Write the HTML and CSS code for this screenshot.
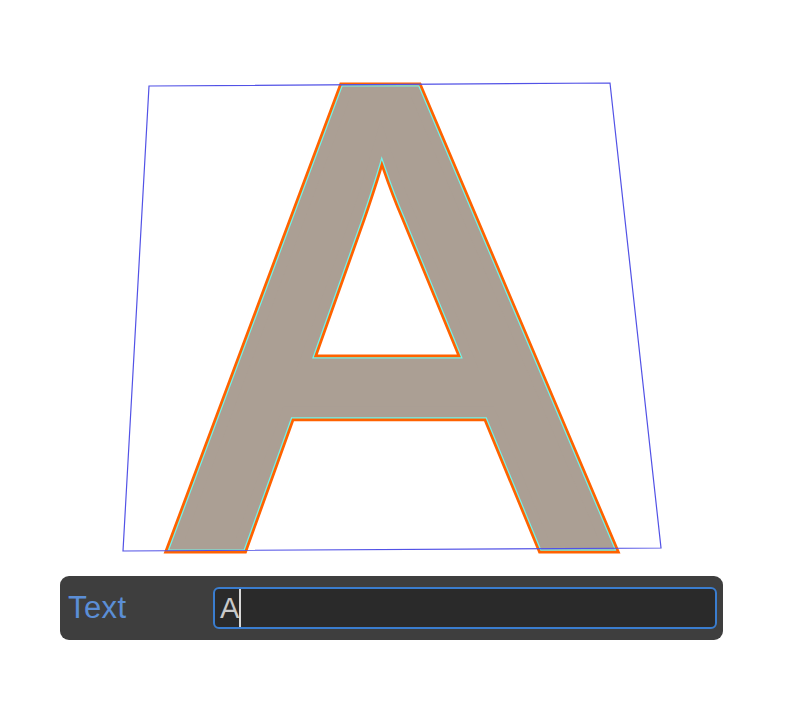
FILE: index.html
```html
<!DOCTYPE html>
<html>
<head>
<meta charset="utf-8">
<link rel="stylesheet" href="styles.css">
</head>
<body>
<div class="canvas">
  <svg class="stage" width="787" height="570" viewBox="0 0 787 570" xmlns="http://www.w3.org/2000/svg" xmlns:xlink="http://www.w3.org/1999/xlink">
    <g transform="translate(176 544) skewX(1.6) scale(0.985 1)">
      <use href="#glyphA" xlink:href="#glyphA" class="l-orange"/>
      <use href="#glyphA" xlink:href="#glyphA" class="l-cyan"/>
      <g class="l-fill"><text id="glyphA" class="glyph-text" x="0" y="0">A</text></g>
    </g>
    <polygon class="quad" points="149,86 610,83 661,548 123,551"/>
  </svg>
</div>
<div class="panel">
  <span class="label">Text</span>
  <div class="field"><span class="value">A</span><span class="caret"></span></div>
</div>
</body>
</html>
```
FILE: styles.css
```css
html, body {
  margin: 0;
  padding: 0;
  background: #ffffff;
}
body {
  width: 787px;
  height: 722px;
  font-family: "Liberation Sans", Arial, sans-serif;
}
.canvas {
  height: 576px;
}
.stage {
  display: block;
}
.glyph-text {
  font-family: "Liberation Sans", Arial, sans-serif;
  font-size: 657px;
}
.l-orange {
  fill: #ff6200;
  stroke: #ff6200;
  stroke-width: 19px;
  stroke-linejoin: miter;
  stroke-miterlimit: 10;
}
.l-cyan {
  fill: #6ff5ea;
  stroke: #6ff5ea;
  stroke-width: 13.5px;
  stroke-linejoin: miter;
  stroke-miterlimit: 10;
}
.l-fill {
  fill: #ab9f94;
  stroke: #ab9f94;
  stroke-width: 11px;
  stroke-linejoin: miter;
  stroke-miterlimit: 10;
}
.quad {
  fill: none;
  stroke: #5252e6;
  stroke-width: 1.2px;
}
.panel {
  margin-left: 60px;
  width: 663px;
  height: 64px;
  box-sizing: border-box;
  background: #3e3e3e;
  border-radius: 9px;
  display: flex;
  align-items: center;
  padding: 0 6px 0 8px;
}
.label {
  color: #5b8ed6;
  font-size: 31px;
  width: 145px;
  letter-spacing: 0.4px;
}
.field {
  flex: 1;
  height: 42px;
  box-sizing: border-box;
  border: 2px solid #3a7dcf;
  border-radius: 6px;
  background: #2a2a2a;
  display: flex;
  align-items: center;
  padding-left: 5px;
}
.value {
  color: #c9c9c9;
  font-size: 29px;
  line-height: 1;
}
.caret {
  width: 2px;
  height: 38px;
  background: #d8d8d8;
}
```
